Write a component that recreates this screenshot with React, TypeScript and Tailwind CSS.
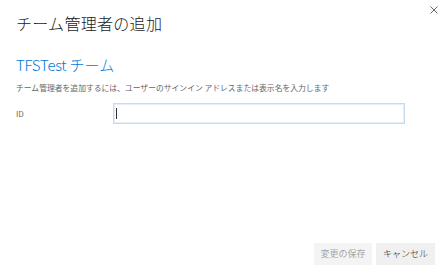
export default function App() {
  return (
    <div
      className="relative flex h-[277px] w-[447px] flex-col bg-white text-[#333]"
      style={{ fontFamily: '"Noto Sans CJK JP", "Noto Sans", sans-serif' }}
    >
      {/* close */}
      <button className="absolute right-[9px] top-[6px] flex h-[8px] w-[8px] items-center justify-center">
        <svg width="8" height="8" viewBox="0 0 8 8" stroke="#666" strokeWidth="1">
          <path d="M0.5 0.5 L7.5 7.5 M7.5 0.5 L0.5 7.5" />
        </svg>
      </button>

      <div className="px-[16px] pt-[11px]">
        <h1 className="text-[16px] font-light leading-[24px] tracking-[0.3px] text-[#222]">チーム管理者の追加</h1>
      </div>

      <div className="px-[16px] pt-[19px]">
        <h2 className="text-[15px] font-light leading-[22px] text-[#0078d7]">
          <span className="tracking-[-0.3px]">TFSTest</span> チーム
        </h2>
        <p className="mt-[6px] text-[7.8px] leading-[12px] text-[#666]">
          チーム管理者を追加するには、ユーザーのサインイン アドレスまたは表示名を入力します
        </p>
      </div>

      <div className="flex items-center px-[16px] pt-[9px]">
        <label className="w-[97px] text-[8px] text-[#666]">ID</label>
        <div className="flex h-[21px] w-[292px] items-center border border-[#c4dbf1] bg-white px-[2px] shadow-[inset_0_0_0_1px_#e3eefa]">
          <span className="h-[11px] w-[1px] bg-[#333]" />
        </div>
      </div>

      <div className="mt-auto flex justify-end gap-[4px] pb-[12px] pr-[12px]">
        <button className="h-[22px] w-[58px] bg-[#f4f4f4] text-[9px] text-[#a6a6a6]">変更の保存</button>
        <button className="h-[22px] w-[59px] bg-[#f0f0f0] text-[9px] font-light text-[#222]">キャンセル</button>
      </div>
    </div>
  )
}
